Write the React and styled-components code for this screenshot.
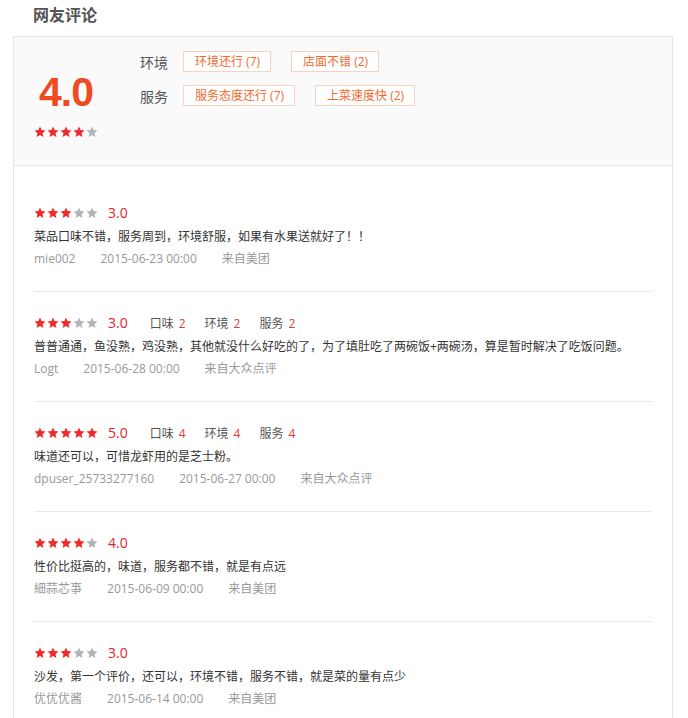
import React from "react";
import styled, { createGlobalStyle } from "styled-components";

const GlobalStyle = createGlobalStyle`
  html, body { margin: 0; padding: 0; background: #fff; }
  body {
    font-family: "Open Sans", "Noto Sans CJK SC", sans-serif;
    color: #333;
  }
`;

const Page = styled.div`
  width: 688px;
`;

const Title = styled.h2`
  margin: 0 0 0 33px;
  height: 36px;
  line-height: 30px;
  font-size: 16px;
  font-weight: bold;
  color: #555;
`;

const Box = styled.section`
  margin-left: 13px;
  width: 660px;
  min-height: 682px;
  box-sizing: border-box;
  border: 1px solid #e5e5e5;
  border-bottom: none;
  background: #fff;
`;

const Header = styled.div`
  display: flex;
  height: 129px;
  box-sizing: border-box;
  background: #fafafa;
  border-bottom: 1px solid #e5e5e5;
`;

const ScoreCol = styled.div`
  width: 64px;
  margin-left: 20px;
  padding-top: 33px;
  display: flex;
  flex-direction: column;
  align-items: center;
`;

const BigScore = styled.div`
  font-family: "Liberation Sans", Arial, sans-serif;
  font-size: 41px;
  font-weight: bold;
  line-height: 44px;
  color: #ee4b22;
  letter-spacing: -1px;
`;

const StarRow = styled.div`
  display: flex;
  gap: 1px;
  margin-top: ${(p) => p.$mt || 0}px;
`;

const TagsCol = styled.div`
  margin-left: 42px;
  padding-top: 14px;
  display: flex;
  flex-direction: column;
  gap: 13px;
`;

const TagRow = styled.div`
  display: flex;
  align-items: center;
  height: 21px;
`;

const TagLabel = styled.span`
  width: 28px;
  margin-right: 15px;
  font-size: 14px;
  color: #555;
  white-space: nowrap;
`;

const Tag = styled.span`
  height: 21px;
  box-sizing: border-box;
  border: 1px solid #f8d3be;
  background: #fff;
  padding: 0 10px 0 11px;
  line-height: 19px;
  font-size: 12px;
  color: #f26a2f;
  margin-right: 20px;
  white-space: nowrap;
`;

const List = styled.div`
  padding: 16px 20px 0;
`;

const Item = styled.div`
  padding: 21px 0 21px;
  border-bottom: 1px solid #e8e8e8;
`;

const TopRow = styled.div`
  display: flex;
  align-items: center;
  height: 20px;
`;

const Rating = styled.span`
  margin-left: 10px;
  font-size: 14px;
  color: #e4222e;
  line-height: 20px;
`;

const Subs = styled.div`
  display: flex;
  gap: 19px;
  margin-left: 22px;
`;

const Sub = styled.span`
  font-size: 12px;
  color: #555;
  white-space: nowrap;
`;

const SubVal = styled.span`
  color: #e4393c;
  margin-left: 5px;
`;

const Comment = styled.p`
  margin: 3px 0 0;
  line-height: 22px;
  font-size: 12px;
  color: #333;
`;

const Meta = styled.div`
  display: flex;
  line-height: 22px;
  font-size: 12px;
  color: #999;
`;

const MetaItem = styled.span`
  margin-right: 25px;
`;

const Star = ({ on }) => (
  <svg width="12" height="12" viewBox="0 0 24 24">
    <polygon
      points="12,1 15.2,8.2 23,9 17.1,14.3 18.8,22 12,18 5.2,22 6.9,14.3 1,9 8.8,8.2"
      fill={on ? "#ef2b2b" : "#b4b4b8"}
    />
  </svg>
);

const Stars = ({ n, mt }) => (
  <StarRow $mt={mt}>
    {[0, 1, 2, 3, 4].map((i) => (
      <Star key={i} on={i < n} />
    ))}
  </StarRow>
);

const reviews = [
  {
    stars: 3,
    rating: "3.0",
    text: "菜品口味不错，服务周到，环境舒服，如果有水果送就好了！！",
    user: "mie002",
    date: "2015-06-23 00:00",
    src: "来自美团",
  },
  {
    stars: 3,
    rating: "3.0",
    subs: [["口味", 2], ["环境", 2], ["服务", 2]],
    text: "普普通通，鱼没熟，鸡没熟，其他就没什么好吃的了，为了填肚吃了两碗饭+两碗汤，算是暂时解决了吃饭问题。",
    user: "Logt",
    date: "2015-06-28 00:00",
    src: "来自大众点评",
  },
  {
    stars: 5,
    rating: "5.0",
    subs: [["口味", 4], ["环境", 4], ["服务", 4]],
    text: "味道还可以，可惜龙虾用的是芝士粉。",
    user: "dpuser_25733277160",
    date: "2015-06-27 00:00",
    src: "来自大众点评",
  },
  {
    stars: 4,
    rating: "4.0",
    text: "性价比挺高的，味道，服务都不错，就是有点远",
    user: "細蒜芯亊",
    date: "2015-06-09 00:00",
    src: "来自美团",
  },
  {
    stars: 3,
    rating: "3.0",
    text: "沙发，第一个评价，还可以，环境不错，服务不错，就是菜的量有点少",
    user: "优优优酱",
    date: "2015-06-14 00:00",
    src: "来自美团",
  },
];

export default function App() {
  return (
    <Page>
      <GlobalStyle />
      <Title>网友评论</Title>
      <Box>
        <Header>
          <ScoreCol>
            <BigScore>4.0</BigScore>
            <Stars n={4} mt={12} />
          </ScoreCol>
          <TagsCol>
            <TagRow>
              <TagLabel>环境</TagLabel>
              <Tag>环境还行 (7)</Tag>
              <Tag>店面不错 (2)</Tag>
            </TagRow>
            <TagRow>
              <TagLabel>服务</TagLabel>
              <Tag>服务态度还行 (7)</Tag>
              <Tag>上菜速度快 (2)</Tag>
            </TagRow>
          </TagsCol>
        </Header>
        <List>
          {reviews.map((r, i) => (
            <Item key={i}>
              <TopRow>
                <Stars n={r.stars} />
                <Rating>{r.rating}</Rating>
                {r.subs && (
                  <Subs>
                    {r.subs.map(([k, v]) => (
                      <Sub key={k}>
                        {k}
                        <SubVal>{v}</SubVal>
                      </Sub>
                    ))}
                  </Subs>
                )}
              </TopRow>
              <Comment>{r.text}</Comment>
              <Meta>
                <MetaItem>{r.user}</MetaItem>
                <MetaItem>{r.date}</MetaItem>
                <MetaItem>{r.src}</MetaItem>
              </Meta>
            </Item>
          ))}
        </List>
      </Box>
    </Page>
  );
}
